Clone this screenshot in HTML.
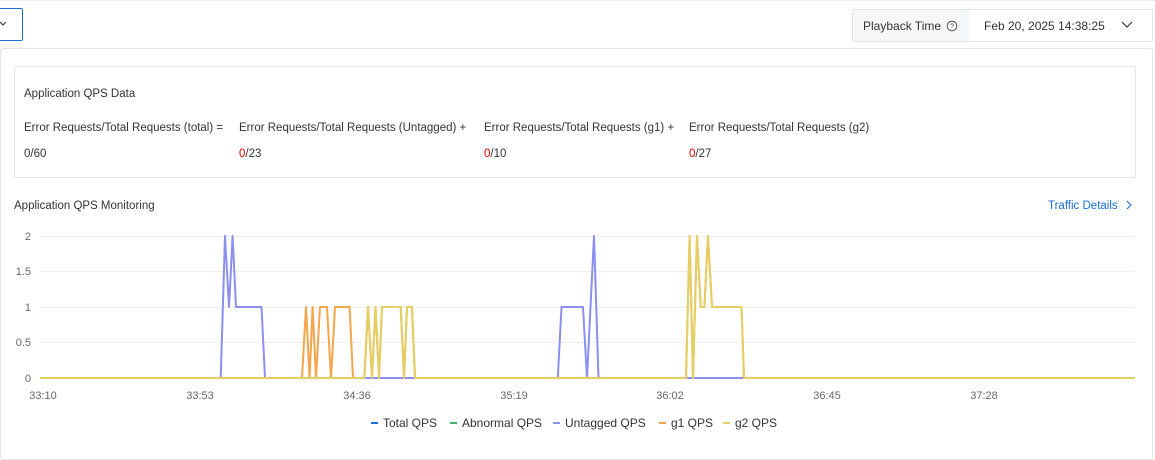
<!DOCTYPE html>
<html><head><meta charset="utf-8"><style>
body{margin:0;width:1155px;height:448px;background:#fff;font-family:"Liberation Sans",sans-serif;color:#333;position:relative;overflow:hidden}
.a{position:absolute;white-space:nowrap}
.t{font-size:11.5px;color:#333}
.r{color:#d00}
</style></head><body>
<div class="a" style="left:0;top:0;width:1155px;height:1px;background:#eceef2"></div>
<div class="a" style="left:-4px;top:8px;width:25px;height:31px;border:1px solid #1b6fd9;border-radius:2px;background:#fff"></div>
<svg class="a" style="left:0;top:20px" width="10" height="10"><path d="M0 2 L3 5 L6 2" stroke="#333" fill="none" stroke-width="1"/></svg>
<div class="a" style="left:852px;top:9px;width:299px;height:31px;border:1px solid #e3e5e8;border-radius:2px"></div>
<div class="a" style="left:853px;top:10px;width:116px;height:31px;background:#f6f7f9"></div>
<div class="a t" style="left:863px;top:19px;font-size:12px">Playback Time</div>
<svg class="a" style="left:946px;top:20px" width="12" height="12"><circle cx="6" cy="6" r="4.8" stroke="#555" fill="none" stroke-width="1"/><text x="6" y="8.6" font-size="7.5" text-anchor="middle" fill="#555" font-family="Liberation Sans">?</text></svg>
<div class="a t" style="left:984px;top:19px;font-size:12px">Feb 20, 2025 14:38:25</div>
<svg class="a" style="left:1121px;top:20px" width="12" height="10"><path d="M1 2 L6 7 L11 2" stroke="#333" fill="none" stroke-width="1.2"/></svg>
<div class="a" style="left:0;top:48px;width:1151px;height:410px;border:1px solid #e3e5e8;border-radius:3px"></div>
<div class="a" style="left:14px;top:66px;width:1120px;height:110px;border:1px solid #e3e5e8;border-radius:2px"></div>
<div class="a t" style="left:24px;top:88px">Application QPS Data</div>
<div class="a t" style="left:24px;top:122px">Error Requests/Total Requests (total) =</div>
<div class="a t" style="left:239px;top:122px">Error Requests/Total Requests (Untagged) +</div>
<div class="a t" style="left:484px;top:122px">Error Requests/Total Requests (g1) +</div>
<div class="a t" style="left:689px;top:122px">Error Requests/Total Requests (g2)</div>
<div class="a t" style="left:24px;top:148px">0/60</div>
<div class="a t" style="left:239px;top:148px"><span class="r">0</span>/23</div>
<div class="a t" style="left:484px;top:148px"><span class="r">0</span>/10</div>
<div class="a t" style="left:689px;top:148px"><span class="r">0</span>/27</div>
<div class="a t" style="left:14px;top:200px">Application QPS Monitoring</div>
<div class="a t" style="left:1048px;top:200px;color:#1b6fd9">Traffic Details</div>
<svg class="a" style="left:1125px;top:200px" width="8" height="10"><path d="M2 1 L6 5 L2 9" stroke="#1b6fd9" fill="none" stroke-width="1.1"/></svg>
<svg class="a" style="left:0;top:225px" width="1155" height="223" font-family="Liberation Sans" font-size="11" fill="#666">
<g transform="translate(0,-225)">
<g stroke="#eee" stroke-width="1">
<line x1="40" y1="236.5" x2="1135" y2="236.5"/><line x1="40" y1="271.5" x2="1135" y2="271.5"/><line x1="40" y1="307.5" x2="1135" y2="307.5"/><line x1="40" y1="342.5" x2="1135" y2="342.5"/>
</g>
<line x1="40" y1="378.5" x2="1135" y2="378.5" stroke="#ccc"/>
<text x="31" y="240" text-anchor="end">2</text><text x="31" y="275" text-anchor="end">1.5</text><text x="31" y="311" text-anchor="end">1</text><text x="31" y="346" text-anchor="end">0.5</text><text x="31" y="382" text-anchor="end">0</text>
<g text-anchor="middle"><text x="43" y="399">33:10</text><text x="200" y="399">33:53</text><text x="357" y="399">34:36</text><text x="514" y="399">35:19</text><text x="670" y="399">36:02</text><text x="827" y="399">36:45</text><text x="984" y="399">37:28</text></g>
<g fill="none" stroke-width="2" stroke-linejoin="round">
<polyline stroke="#8a8ff0" points="40,378 220.7,378 225,236 229,307 232.6,236 236,307 261.5,307 265,378 557.8,378 561.5,307 583,307 587,378 594,236 598.5,378 1135,378"/>
<polyline stroke="#f5a54a" points="40,378 302,378 306,307 309.6,378 312.6,307 316,378 320,307 327,307 331,378 335,307 349.6,307 353,378 364.4,378 368,307 372,378 375.5,307 379,378 382,307 400.7,307 404,378 407,307 412,307 415,378 686,378 689.6,236 693,378 697,236 700.7,307 704.4,307 708,236 712,307 741.5,307 744,378 1135,378"/>
<polyline stroke="#e3cf63" points="40,378 364.4,378 368,307 372,378 375.5,307 379,378 382,307 400.7,307 404,378 407,307 412,307 415,378 686,378 689.6,236 693,378 697,236 700.7,307 704.4,307 708,236 712,307 741.5,307 744,378 1135,378"/>
</g>
<g font-size="12" fill="#333">
<line x1="371" y1="423" x2="378" y2="423" stroke="#1b6fd9" stroke-width="2"/><text x="383" y="427">Total QPS</text>
<line x1="450" y1="423" x2="457" y2="423" stroke="#3cb46e" stroke-width="2"/><text x="462" y="427">Abnormal QPS</text>
<line x1="553" y1="423" x2="560" y2="423" stroke="#8a8ff0" stroke-width="2"/><text x="565" y="427">Untagged QPS</text>
<line x1="659" y1="423" x2="666" y2="423" stroke="#f5a54a" stroke-width="2"/><text x="671" y="427">g1 QPS</text>
<line x1="723" y1="423" x2="730" y2="423" stroke="#e3cf63" stroke-width="2"/><text x="735" y="427">g2 QPS</text>
</g>
</g>
</svg>
</body></html>
